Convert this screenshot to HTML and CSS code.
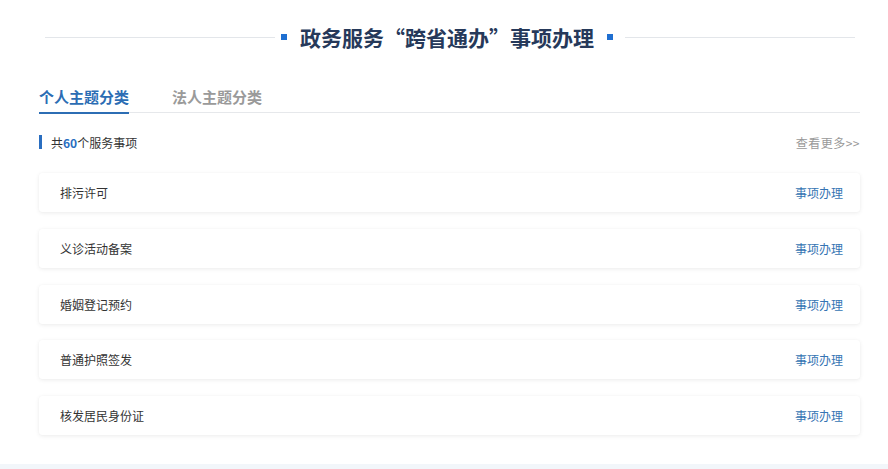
FILE: index.html
```html
<!DOCTYPE html>
<html lang="zh-CN">
<head>
<meta charset="utf-8">
<title>政务服务“跨省通办”事项办理</title>
<link rel="stylesheet" href="styles.css">
</head>
<body>
<div class="page">
  <div class="head">
    <span class="hline"></span>
    <span class="sq"></span>
    <h1 class="title">政务服务“跨省通办”事项办理</h1>
    <span class="sq sq-right"></span>
    <span class="hline"></span>
  </div>
  <div class="tabs">
    <div class="tab active">个人主题分类</div>
    <div class="tab">法人主题分类</div>
  </div>
  <div class="count-row">
    <div class="count"><span class="bar"></span>共<b>60</b>个服务事项</div>
    <div class="more">查看更多&gt;&gt;</div>
  </div>
  <div class="list">
    <div class="card"><span class="name">排污许可</span><span class="act">事项办理</span></div>
    <div class="card"><span class="name">义诊活动备案</span><span class="act">事项办理</span></div>
    <div class="card"><span class="name">婚姻登记预约</span><span class="act">事项办理</span></div>
    <div class="card"><span class="name">普通护照签发</span><span class="act">事项办理</span></div>
    <div class="card"><span class="name">核发居民身份证</span><span class="act">事项办理</span></div>
  </div>
</div>
<div class="band"></div>
</body>
</html>
```
FILE: styles.css
```css
html, body {
  margin: 0;
  padding: 0;
  background: #ffffff;
}
body {
  font-family: "Noto Sans CJK SC", "Noto Sans", sans-serif;
  width: 888px;
  height: 469px;
  overflow: hidden;
}
.page {
  padding: 22px 28px 0 39px;
}
.head {
  display: flex;
  align-items: center;
  height: 30px;
  margin: 0 5px 0 6px;
}
.hline {
  flex: 1;
  height: 1px;
  background: #e3e6ea;
}
.sq {
  width: 6px;
  height: 6px;
  background: #1f6fd1;
  margin: 0 6px;
}
.sq-right {
  margin-right: 12px;
}
.title {
  margin: 0 7px;
  font-size: 21px;
  line-height: 30px;
  font-weight: 700;
  color: #26395a;
}
.tabs {
  display: flex;
  margin-top: 35px;
  border-bottom: 1px solid #e6e8eb;
}
.tab {
  font-size: 15px;
  line-height: 20px;
  font-weight: 700;
  color: #9a9a9a;
  padding-bottom: 5px;
  margin-right: 43px;
}
.tab.active {
  color: #2c6db4;
  border-bottom: 2px solid #2c6db4;
  margin-bottom: -2px;
}
.count-row {
  display: flex;
  justify-content: space-between;
  align-items: center;
  margin-top: 21px;
  height: 16px;
}
.count {
  display: flex;
  align-items: center;
  font-size: 12px;
  color: #333;
}
.count b {
  color: #2a6ec0;
  font-weight: 700;
}
.bar {
  width: 3px;
  height: 14px;
  background: #2a6ec0;
  margin-right: 9px;
}
.more {
  font-size: 12px;
  color: #999;
  letter-spacing: 0.5px;
}
.list {
  display: flex;
  flex-direction: column;
  gap: 16.75px;
  margin-top: 23px;
}
.card {
  height: 39px;
  display: flex;
  align-items: center;
  justify-content: space-between;
  padding: 0 17px 0 21px;
  background: #fff;
  border-radius: 3px;
  box-shadow: 0 1px 4px rgba(0, 0, 0, 0.08), 0 0 1px rgba(0, 0, 0, 0.05);
}
.name {
  font-size: 12px;
  color: #333;
}
.act {
  font-size: 12px;
  color: #3574b3;
}
.band {
  margin-top: 29px;
  height: 8px;
  background: #f2f6fa;
}
```
